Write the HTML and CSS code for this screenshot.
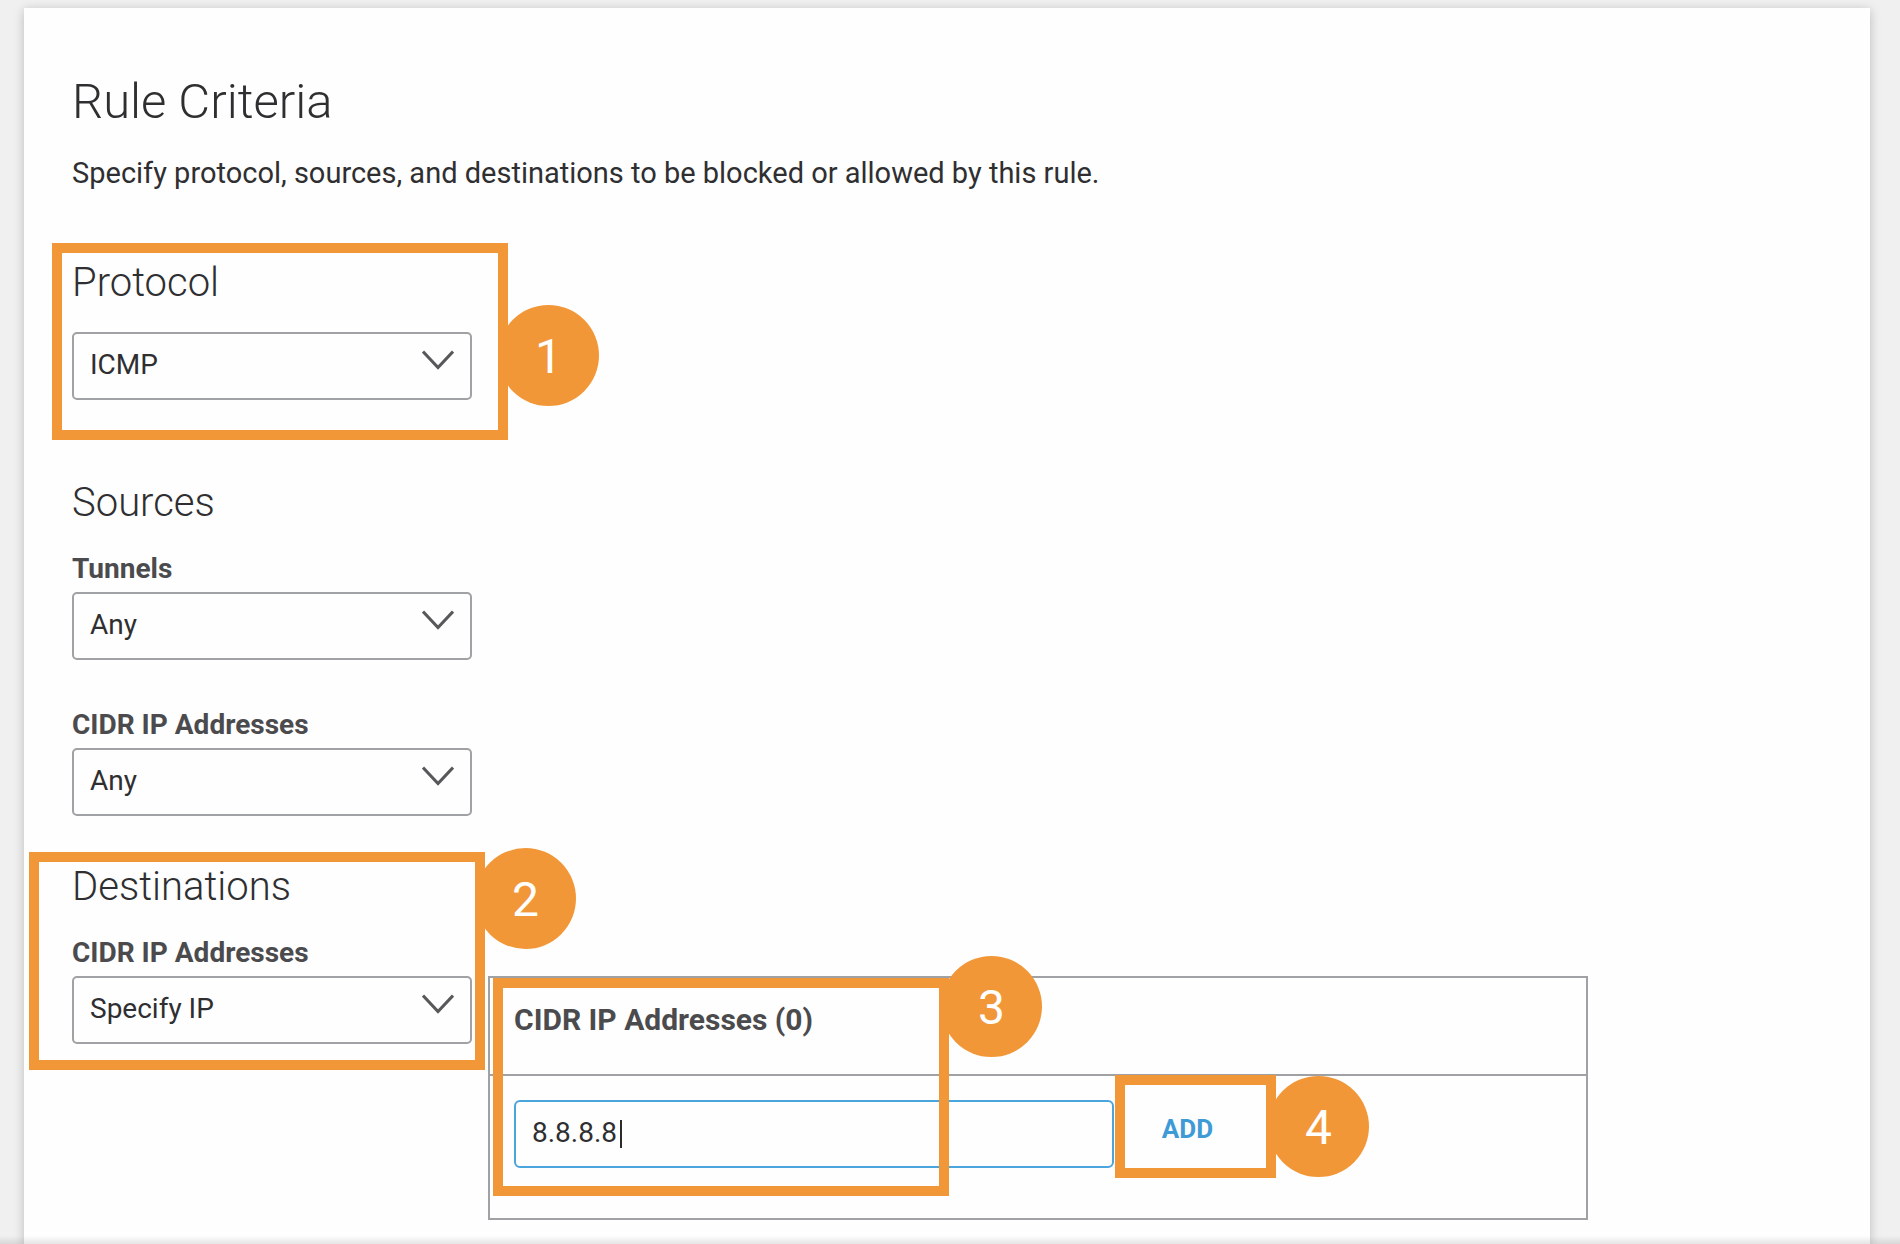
FILE: index.html
```html
<!DOCTYPE html>
<html lang="en">
<head>
<meta charset="utf-8">
<title>Rule Criteria</title>
<link rel="stylesheet" href="styles.css">
</head>
<body>
<main class="card">
  <h1 class="title">Rule Criteria</h1>
  <p class="intro">Specify protocol, sources, and destinations to be blocked or allowed by this rule.</p>

  <section class="section section-protocol">
    <h2 class="heading" id="protocol-heading">Protocol</h2>
    <div class="select">
      <select class="select-control" aria-labelledby="protocol-heading"><option>ICMP</option></select>
      <svg class="chevron" viewBox="0 0 32 20" aria-hidden="true"><path d="M1 1.5 16 17.5 31 1.5"/></svg>
    </div>
    <div class="callout callout-protocol"><span class="badge">1</span></div>
  </section>

  <section class="section section-sources">
    <h2 class="heading">Sources</h2>
    <div class="field">
      <label class="label" for="tunnels">Tunnels</label>
      <div class="select">
        <select class="select-control" id="tunnels"><option>Any</option></select>
        <svg class="chevron" viewBox="0 0 32 20" aria-hidden="true"><path d="M1 1.5 16 17.5 31 1.5"/></svg>
      </div>
    </div>
    <div class="field">
      <label class="label" for="source-cidr">CIDR IP Addresses</label>
      <div class="select">
        <select class="select-control" id="source-cidr"><option>Any</option></select>
        <svg class="chevron" viewBox="0 0 32 20" aria-hidden="true"><path d="M1 1.5 16 17.5 31 1.5"/></svg>
      </div>
    </div>
  </section>

  <section class="section section-destinations">
    <div class="destination-choice">
      <h2 class="heading">Destinations</h2>
      <div class="field">
        <label class="label" for="destination-cidr">CIDR IP Addresses</label>
        <div class="select">
          <select class="select-control" id="destination-cidr"><option>Specify IP</option></select>
          <svg class="chevron" viewBox="0 0 32 20" aria-hidden="true"><path d="M1 1.5 16 17.5 31 1.5"/></svg>
        </div>
      </div>
      <div class="callout callout-destination"><span class="badge">2</span></div>
    </div>
    <div class="panel">
      <label class="panel-title" for="address">CIDR IP Addresses (0)</label>
      <div class="panel-body">
        <div class="entry">
          <input class="entry-input" id="address" type="text" value="8.8.8.8">
          <span class="caret"></span>
        </div>
        <div class="action">
          <button class="add" type="button">ADD</button>
          <div class="callout callout-add"><span class="badge">4</span></div>
        </div>
      </div>
      <div class="callout callout-address"><span class="badge">3</span></div>
    </div>
  </section>
</main>
<div class="bottom-shade"></div>
</body>
</html>
```

FILE: styles.css
```css
* {
  box-sizing: border-box;
}

body {
  display: flex;
  flex-direction: column;
  min-height: 100vh;
  margin: 0;
  background: #f0f0f0;
  color: #2f2f31;
  font-family: Roboto, "Liberation Sans", sans-serif;
  font-size: 28px;
}

.card {
  flex: 1;
  margin: 8px 30px 0 24px;
  padding: 64px 48px 24px;
  background: #fefefe;
  box-shadow: 0 2px 10px rgba(0, 0, 0, 0.22);
}

.title {
  margin: 0 0 23px;
  font-size: 49px;
  font-weight: 300;
  line-height: 60px;
}

.intro {
  margin: 0 0 68px;
  font-size: 29px;
  line-height: 36px;
}

.section {
  position: relative;
}

.section-protocol {
  width: 400px;
  margin-bottom: 79px;
}

.section-sources {
  width: 400px;
  margin-bottom: 47px;
}

.section-destinations {
  display: flex;
  gap: 16px;
}

.heading {
  margin: 0 0 25px;
  font-size: 40px;
  font-weight: 300;
  line-height: 48px;
}

.field + .field {
  margin-top: 48px;
}

.label {
  display: block;
  margin-bottom: 6px;
  color: #4b4b4e;
  font-size: 28px;
  font-weight: 700;
  line-height: 34px;
}

.select {
  position: relative;
}

.select-control {
  display: block;
  width: 100%;
  height: 68px;
  padding: 0 60px 4px 16px;
  border: 2px solid #a0a1a4;
  border-radius: 5px;
  background: transparent;
  appearance: none;
  color: inherit;
  font: inherit;
}

.chevron {
  position: absolute;
  top: 18px;
  right: 18px;
  width: 32px;
  height: 20px;
  fill: none;
  stroke: #58585b;
  stroke-width: 3;
  pointer-events: none;
}

.destination-choice {
  position: relative;
  flex: 0 0 400px;
  align-self: flex-start;
}

.panel {
  position: relative;
  flex: 0 1 1100px;
  margin-top: 113px;
  border: 2px solid #a0a1a4;
}

.panel-title {
  display: block;
  padding: 26px 24px 38px;
  border-bottom: 2px solid #a0a1a4;
  color: #4b4b4e;
  font-size: 30px;
  font-weight: 700;
  line-height: 32px;
}

.panel-body {
  display: flex;
  gap: 1px;
  padding: 24px 24px 50px;
}

.entry {
  position: relative;
  flex: 0 1 600px;
}

.entry-input {
  display: block;
  width: 100%;
  height: 68px;
  padding: 0 16px 4px;
  border: 2px solid #49a5dc;
  border-radius: 6px;
  background: transparent;
  color: inherit;
  font: inherit;
}

.caret {
  position: absolute;
  top: 20px;
  left: 106px;
  width: 2px;
  height: 28px;
  background: #2b2b2d;
}

.action {
  position: relative;
  width: 161px;
}

.add {
  width: 100%;
  height: 58px;
  padding: 0 16px 0 0;
  border: 0;
  background: transparent;
  color: #3f9bd6;
  font: inherit;
  font-size: 26px;
  font-weight: 700;
}

/* Numbered step outlines laid over the form */
.callout {
  position: absolute;
  z-index: 1;
  border: 10px solid #f29738;
  pointer-events: none;
}

.callout-protocol {
  inset: -16px -36px -40px -20px;
}

.callout-destination {
  inset: -11px -13px -26px -43px;
}

.callout-address {
  top: 0;
  left: 3px;
  width: 456px;
  height: 218px;
}

.callout-add {
  inset: -25px 0 -10px 0;
}

.badge {
  position: absolute;
  top: calc(50% - 37px);
  left: 100%;
  width: 101px;
  height: 101px;
  border-radius: 50%;
  background: #f29738;
  color: #fff;
  font-size: 48px;
  line-height: 103px;
  text-align: center;
}

.callout-destination .badge {
  top: -14px;
}

.callout-address .badge {
  top: -32px;
  left: calc(100% + 2px);
}

.callout-add .badge {
  top: -9px;
  left: calc(100% + 2px);
}

.bottom-shade {
  position: fixed;
  right: 0;
  bottom: 0;
  left: 0;
  height: 8px;
  background: linear-gradient(rgba(0, 0, 0, 0), rgba(0, 0, 0, 0.1));
}
```
